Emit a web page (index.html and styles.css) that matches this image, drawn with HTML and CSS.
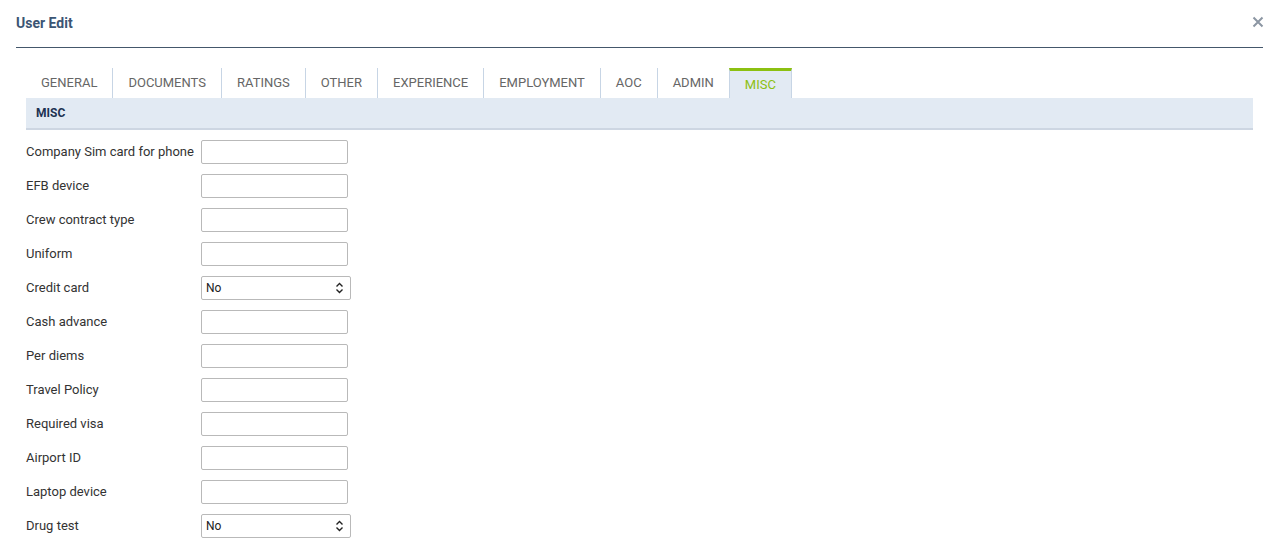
FILE: index.html
```html
<!DOCTYPE html>
<html lang="en">
<head>
    <meta charset="UTF-8">
    <meta name="viewport" content="width=device-width, initial-scale=1.0">
    <title>User Edit</title>
    <link rel="stylesheet" href="styles.css">
</head>
<body>
    <div class="dialog">
        <div class="dialog-header">
            <h1>User Edit</h1>
            <span class="close">
                <svg width="12" height="12" viewBox="0 0 12 12"><path d="M1.5 1.5 L10.5 10.5 M10.5 1.5 L1.5 10.5" stroke="#8c96a3" stroke-width="2" fill="none"/></svg>
            </span>
        </div>

        <div class="content">
            <ul class="tabs">
                <li>GENERAL</li>
                <li>DOCUMENTS</li>
                <li>RATINGS</li>
                <li>OTHER</li>
                <li>EXPERIENCE</li>
                <li>EMPLOYMENT</li>
                <li>AOC</li>
                <li>ADMIN</li>
                <li class="active">MISC</li>
            </ul>
            <div class="section-title">MISC</div>

            <form class="fields">
                <label>Company Sim card for phone</label>
                <input type="text">
                <label>EFB device</label>
                <input type="text">
                <label>Crew contract type</label>
                <input type="text">
                <label>Uniform</label>
                <input type="text">
                <label>Credit card</label>
                <div class="select">
                    <select><option>No</option><option>Yes</option></select>
                    <svg class="arrows" width="9" height="12" viewBox="0 0 9 12"><path d="M1.5 4.5 L4.5 1.5 L7.5 4.5 M1.5 7.5 L4.5 10.5 L7.5 7.5" stroke="#222" stroke-width="1.4" fill="none"/></svg>
                </div>
                <label>Cash advance</label>
                <input type="text">
                <label>Per diems</label>
                <input type="text">
                <label>Travel Policy</label>
                <input type="text">
                <label>Required visa</label>
                <input type="text">
                <label>Airport ID</label>
                <input type="text">
                <label>Laptop device</label>
                <input type="text">
                <label>Drug test</label>
                <div class="select">
                    <select><option>No</option><option>Yes</option></select>
                    <svg class="arrows" width="9" height="12" viewBox="0 0 9 12"><path d="M1.5 4.5 L4.5 1.5 L7.5 4.5 M1.5 7.5 L4.5 10.5 L7.5 7.5" stroke="#222" stroke-width="1.4" fill="none"/></svg>
                </div>
            </form>
        </div>
    </div>
</body>
</html>
```

FILE: styles.css
```css
body {
    margin: 0;
    font-family: Roboto, "Liberation Sans", sans-serif;
    font-size: 13px;
    color: #333;
    background: white;
}

.dialog {
    padding: 0 16px;
}

.dialog-header {
    display: flex;
    align-items: center;
    justify-content: space-between;
    height: 47px;
    border-bottom: 1px solid #44576b;
}
.dialog-header h1 {
    margin: 0;
    font-size: 14px;
    font-weight: bold;
    color: #3b5574;
    position: relative;
    top: -1px;
}
.close {
    display: flex;
    margin-right: -1px;
    position: relative;
    top: -2px;
}

.content {
    margin: 20px 10px 0 10px;
}

.tabs {
    display: flex;
    list-style: none;
    margin: 0;
    padding: 0;
    height: 30px;
}
.tabs li {
    padding: 0 15px;
    line-height: 30px;
    color: #666;
    border-right: 1px solid #c7d5e5;
}
.tabs li:nth-last-child(2) {
    border-right: none;
}
.tabs li.active {
    color: #8cc011;
    background-color: #e2eaf3;
    border-top: 3px solid #8cc011;
    border-left: 1px solid #c7d5e5;
    border-right: 1px solid #c7d5e5;
    line-height: 27px;
    padding: 0 15px;
}

.section-title {
    background-color: #e2eaf3;
    border-bottom: 2px solid #cdd6e2;
    height: 30px;
    line-height: 31px;
    padding-left: 10px;
    font-size: 12px;
    font-weight: bold;
    color: #1e3352;
}

.fields {
    display: grid;
    grid-template-columns: 175px auto;
    justify-content: start;
    align-items: center;
    row-gap: 10px;
    margin-top: 10px;
}
.fields label {
    white-space: nowrap;
    margin-top: -2px;
}
.fields input {
    box-sizing: border-box;
    width: 147px;
    height: 24px;
    margin: 0;
    border: 1px solid #b9b9b9;
    border-radius: 2px;
}

.select {
    position: relative;
    width: 150px;
    height: 24px;
}
.select select {
    appearance: none;
    box-sizing: border-box;
    width: 150px;
    height: 24px;
    margin: 0;
    padding: 0 0 0 4px;
    border: 1px solid #b9b9b9;
    border-radius: 2px;
    background: white;
    font-family: Roboto, "Liberation Sans", sans-serif;
    font-size: 12px;
    color: #222;
}
.select .arrows {
    position: absolute;
    right: 7px;
    top: 6px;
    pointer-events: none;
}
```
